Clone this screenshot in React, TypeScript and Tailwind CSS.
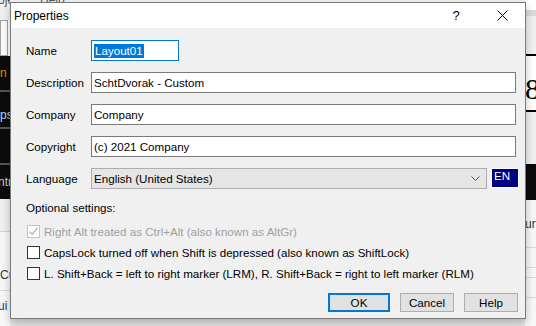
import React from "react";

const font = { fontFamily: '"Liberation Sans", Arial, sans-serif' };

function Field({ label, children }: { label: string; children: React.ReactNode }) {
  return (
    <div className="flex items-center h-[21px]">
      <div className="w-[65px] shrink-0 text-[11.6px] text-black">{label}</div>
      <div className="flex-1 flex items-center h-full">{children}</div>
    </div>
  );
}

function TextBox({ value }: { value: string }) {
  return (
    <div className="flex-1 h-full bg-white border border-[#7a7a7a] flex items-center pl-[2px] text-[11.6px] text-black">
      {value}
    </div>
  );
}

function CheckRow({ label, checked, disabled }: { label: string; checked?: boolean; disabled?: boolean }) {
  return (
    <div className="flex items-center h-[21px] pl-[1px]">
      <div
        className={
          "w-[13px] h-[13px] border bg-white flex items-center justify-center " +
          (disabled ? "border-[#c4c4c4] bg-[#f5f5f5]" : "border-[#333333]")
        }
      >
        {checked && (
          <svg width="11" height="11" viewBox="0 0 11 11">
            <path d="M1.5 5.5 L4.2 8.2 L9.5 2" fill="none" stroke="#b5b5b5" strokeWidth="1.3" />
          </svg>
        )}
      </div>
      <span className={"ml-[4px] text-[11.6px] whitespace-nowrap " + (disabled ? "text-[#a0a0a0]" : "text-black")}>{label}</span>
    </div>
  );
}

function Background() {
  return (
    <div className="absolute inset-0 flex">
      {/* left strip */}
      <div className="w-[10px] flex flex-col text-[12px]">
        <div className="h-[20px] bg-[#f0f0f0] relative overflow-hidden">
          <span className="absolute top-[-9px] left-[-2px] text-[#555] whitespace-nowrap">oject</span>
        </div>
        <div className="h-[36px] bg-[#fbfbfb] border border-[#a0a0a0] mr-[2px]" />
        <div className="h-[36px] bg-[#0b0b0b] border-b-2 border-[#555] text-[#f08a00] flex items-center">n</div>
        <div className="h-[37px] bg-[#0b0b0b] border-b-2 border-[#555] text-[#bcd7ff] flex items-center pt-[10px] whitespace-nowrap">ps</div>
        <div className="h-[36px] bg-[#0b0b0b] border-b-2 border-[#555]" />
        <div className="h-[34px] bg-[#0b0b0b] text-[#ccc] flex items-center whitespace-nowrap -ml-[2px]">ntr</div>
        <div className="h-[33px] bg-[#f0f0f0] border-b border-[#d0d0d0]" />
        <div className="h-[59px] bg-[#f7f7f7] border-b border-[#d8d8d8] flex items-end pb-[6px] text-[#333] whitespace-nowrap">Cur</div>
        <div className="flex-1 bg-[#f7f7f7] text-[#333] whitespace-nowrap pt-[6px] -ml-[2px]">ui</div>
      </div>
      {/* middle */}
      <div className="flex-1 flex flex-col">
        <div className="h-[20px] bg-[#f0f0f0] relative overflow-hidden text-[12px]">
          <span className="absolute top-[-9px] left-[30px] text-[#555]">Help</span>
        </div>
        <div className="flex-1 bg-[#e8e8e8]" />
      </div>
      {/* right strip */}
      <div className="w-[11px] flex flex-col">
        <div className="h-[10px] bg-white" />
        <div className="h-[6px] bg-[#dadada]" />
        <div className="h-[40px] bg-[#f0f0f0] border-b-2 border-black" />
        <div className="h-[56px] bg-white border-b-2 border-black relative overflow-hidden">
          <span className="absolute left-[0px] top-[18px] text-[30px] leading-none text-black" style={{ fontFamily: '"Liberation Serif", serif' }}>8</span>
        </div>
        <div className="h-[52px] bg-[#f0f0f0]" />
        <div className="h-[36px] bg-[#0b0b0b]" />
        <div className="h-[48px] bg-[#f7f7f7] border-b border-[#d8d8d8] text-[12px] text-[#333] flex items-center whitespace-nowrap">ur</div>
        <div className="h-[20px] bg-[#f7f7f7] border-b border-[#d8d8d8]" />
        <div className="h-[10px] bg-[#f7f7f7] border-b border-[#d8d8d8]" />
        <div className="h-[20px] bg-[#f7f7f7] border-b border-[#d8d8d8]" />
        <div className="flex-1 bg-[#f7f7f7]" />
      </div>
    </div>
  );
}

export default function App() {
  return (
    <div className="relative w-[536px] h-[326px] overflow-hidden" style={font}>
      <Background />

      <div className="absolute left-[10px] top-[2px] w-[516px] h-[317px] border border-[#7a7a7a] bg-[#f0f0f0] shadow-[0_4px_8px_rgba(0,0,0,0.25)] flex flex-col">
        {/* title bar */}
        <div className="h-[25px] bg-white flex items-center shrink-0">
          <span className="ml-[3px] text-[12px] text-black">Properties</span>
          <div className="ml-auto flex items-center">
            <span className="w-[46px] text-center text-[13px] text-black">?</span>
            <div className="w-[46px] h-[25px] flex items-center justify-center">
              <svg width="11" height="11" viewBox="0 0 11 11">
                <path d="M0.5 0.5 L10.5 10.5 M10.5 0.5 L0.5 10.5" stroke="#000" strokeWidth="1" />
              </svg>
            </div>
          </div>
        </div>

        {/* body */}
        <div className="flex-1 flex flex-col pl-[15px] pr-[9px] pt-[12px]">
          <div className="flex flex-col gap-[11px]">
            <Field label="Name">
              <div className="w-[88px] h-full bg-white border border-[#0078d7] flex items-center pl-[2px]">
                <span className="bg-[#0078d7] text-white text-[11.6px] leading-[14px] px-[1px]">Layout01</span>
              </div>
            </Field>
            <Field label="Description">
              <TextBox value="SchtDvorak - Custom" />
            </Field>
            <Field label="Company">
              <TextBox value="Company" />
            </Field>
            <Field label="Copyright">
              <TextBox value="(c) 2021 Company" />
            </Field>
            <Field label="Language">
              <div className="flex-1 h-full bg-[#e5e5e5] border border-[#adadad] flex items-center pl-[2px] text-[11.6px] text-black">
                <span>English (United States)</span>
                <svg className="ml-auto mr-[6px]" width="9" height="5" viewBox="0 0 9 5">
                  <path d="M0.5 0.5 L4.5 4.5 L8.5 0.5" fill="none" stroke="#555" strokeWidth="1" />
                </svg>
              </div>
              <div className="ml-[4px] -mr-[3px] w-[28px] h-[20px] border border-white bg-[#000080] text-white text-[11.6px] leading-[14px] pl-[2px] self-start">
                EN
              </div>
            </Field>
          </div>

          <div className="mt-[11px] h-[16px] text-[11.6px] text-black leading-[16px]">Optional settings:</div>

          <div className="mt-[5px] flex flex-col">
            <CheckRow label="Right Alt treated as Ctrl+Alt (also known as AltGr)" checked disabled />
            <CheckRow label="CapsLock turned off when Shift is depressed (also known as ShiftLock)" />
            <CheckRow label="L. Shift+Back = left to right marker (LRM),  R. Shift+Back = right to left marker (RLM)" />
          </div>

          <div className="mt-[9px] flex justify-end gap-[10px] -mr-[2px]">
            <div className="w-[62px] h-[19px] bg-[#e1e1e1] border-2 border-[#0078d7] flex items-center justify-center text-[11.6px] text-black">
              OK
            </div>
            <div className="w-[54px] h-[19px] bg-[#e1e1e1] border border-[#adadad] flex items-center justify-center text-[11.6px] text-black">
              Cancel
            </div>
            <div className="w-[54px] h-[19px] bg-[#e1e1e1] border border-[#adadad] flex items-center justify-center text-[11.6px] text-black">
              Help
            </div>
          </div>
        </div>
      </div>
    </div>
  );
}
